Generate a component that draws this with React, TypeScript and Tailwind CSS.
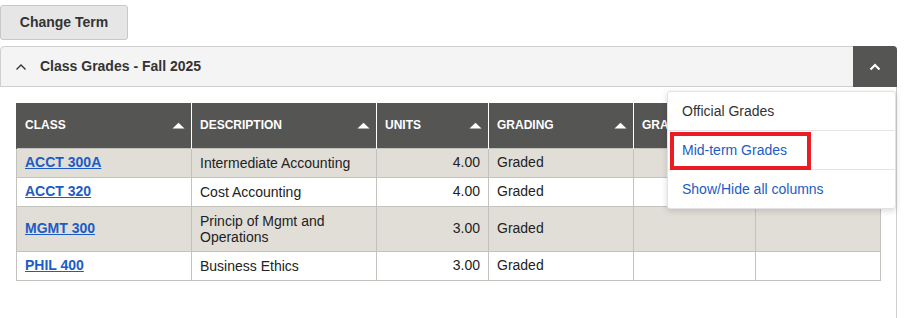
import React from 'react';

type Row = {
  cls: string;
  desc: string;
  units: string;
  grading: string;
  tall?: boolean;
  shaded?: boolean;
};

const rows: Row[] = [
  { cls: 'ACCT 300A', desc: 'Intermediate Accounting', units: '4.00', grading: 'Graded', shaded: true },
  { cls: 'ACCT 320', desc: 'Cost Accounting', units: '4.00', grading: 'Graded' },
  { cls: 'MGMT 300', desc: 'Princip of Mgmt and Operations', units: '3.00', grading: 'Graded', tall: true, shaded: true },
  { cls: 'PHIL 400', desc: 'Business Ethics', units: '3.00', grading: 'Graded' },
];

// column widths in px, taken from the screenshot
const cols = [
  { label: 'CLASS', w: 'w-[175px]' },
  { label: 'DESCRIPTION', w: 'w-[185px]' },
  { label: 'UNITS', w: 'w-[112px]' },
  { label: 'GRADING', w: 'w-[145px]' },
  { label: 'GRADE', w: 'w-[122px]' },
  { label: '', w: 'w-[125px]' },
];

const SortUp = () => (
  <svg width="13" height="7" viewBox="0 0 13 7" className="shrink-0">
    <path d="M0.5 6.5 L6.5 0.8 L12.5 6.5 Z" fill="#ffffff" />
  </svg>
);

const Chevron = ({ color, width }: { color: string; width: number }) => (
  <svg width="12" height="8" viewBox="0 0 12 8">
    <polyline points="1.5,6.5 6,2 10.5,6.5" fill="none" stroke={color} strokeWidth={width} />
  </svg>
);

export default function App() {
  return (
    <div className="w-[906px] h-[318px] overflow-hidden bg-white text-[#222] font-['Liberation_Sans',Arial,sans-serif]">
      {/* Change term button */}
      <div className="pt-[5px]">
        <button className="h-[35px] w-[128px] rounded-[3px] border border-[#c8c8c8] bg-[#e6e6e6] text-[14px] font-bold text-[#333]">
          Change Term
        </button>
      </div>

      {/* Panel */}
      <div className="relative mt-[6px] w-[897px]">
        <div className="flex h-[41px] items-stretch rounded-t-[4px] border border-[#cfcfcf] bg-[#f4f4f4]">
          <div className="flex flex-1 items-center pl-[14px]">
            <Chevron color="#333" width={1.4} />
            <span className="ml-[13px] text-[14px] font-bold text-[#333]">Class Grades - Fall 2025</span>
          </div>
          <div className="-my-px -mr-px flex w-[44px] items-center justify-center rounded-tr-[4px] bg-[#555553]">
            <Chevron color="#ffffff" width={2.2} />
          </div>
        </div>

        <div className="h-[240px] border-r border-[#cfcfcf] pl-[16px] pt-[16px]">
          <table className="w-[864px] table-fixed border-collapse text-[14px]">
            <thead>
              <tr className="h-[45px] bg-[#555553]">
                {cols.map((c, i) => (
                  <th
                    key={i}
                    className={`${c.w} border-x border-white p-0 pl-[8px] pr-[6px] text-left align-middle text-[12px] font-bold text-white first:border-l-[#555553] last:border-r-[#555553]`}
                  >
                    <div className="flex items-center justify-between">
                      <span>{c.label}</span>
                      {i < 4 && <SortUp />}
                    </div>
                  </th>
                ))}
              </tr>
            </thead>
            <tbody>
              {rows.map((r) => (
                <tr
                  key={r.cls}
                  className={`${r.tall ? 'h-[45px]' : 'h-[29px]'} ${r.shaded ? 'bg-[#e1ded8]' : 'bg-white'}`}
                >
                  <td className="border border-[#c4c2bd] px-[8px] align-middle">
                    <a href="#" className="font-bold text-[#1b5cc5] underline">
                      {r.cls}
                    </a>
                  </td>
                  <td className="border border-[#c4c2bd] px-[8px] align-middle leading-[16px]">{r.desc}</td>
                  <td className="border border-[#c4c2bd] px-[8px] text-right align-middle">{r.units}</td>
                  <td className="border border-[#c4c2bd] px-[8px] align-middle">{r.grading}</td>
                  <td className="border border-[#c4c2bd]"></td>
                  <td className="border border-[#c4c2bd]"></td>
                </tr>
              ))}
            </tbody>
          </table>
        </div>

        {/* Dropdown menu */}
        <div className="absolute right-px top-[45px] w-[229px] rounded-[3px] border border-[#e2e2e2] bg-white text-[14px] shadow-[0_2px_6px_rgba(0,0,0,0.15)]">
          <div className="flex h-[39px] items-center border-b border-[#e4e4e4] pl-[14px] text-[#333]">Official Grades</div>
          <div className="relative flex h-[39px] items-center border-b border-[#e4e4e4] pl-[14px] text-[#1b5cc5]">
            Mid-term Grades
            <span className="absolute left-[2px] top-[1px] h-[38px] w-[141px] border-4 border-[#ec1c24]"></span>
          </div>
          <div className="flex h-[38px] items-center pl-[14px] text-[#1b5cc5]">Show/Hide all columns</div>
        </div>
      </div>
    </div>
  );
}
